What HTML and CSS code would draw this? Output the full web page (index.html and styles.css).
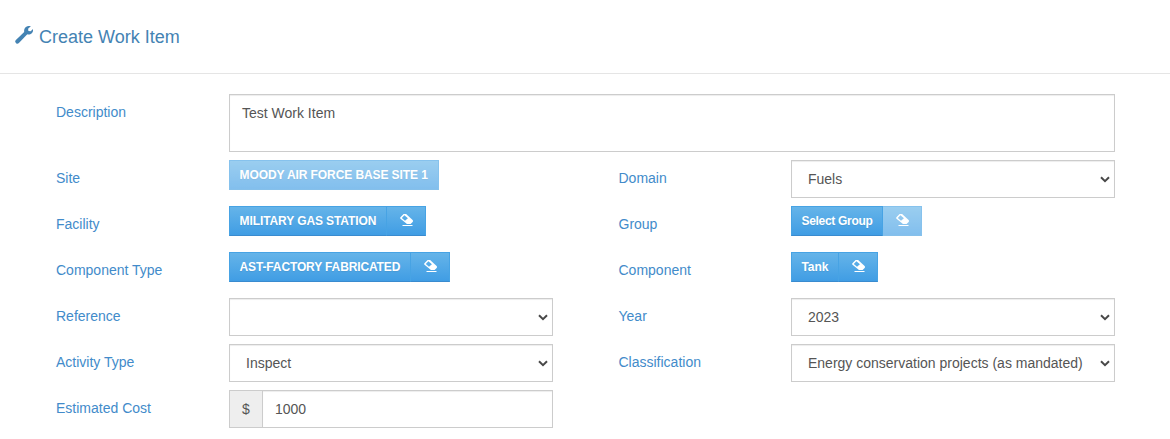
FILE: index.html
```
<!DOCTYPE html>
<html lang="en">
<head>
<meta charset="utf-8">
<title>Create Work Item</title>
<link rel="stylesheet" href="styles.css">
</head>
<body>
<svg width="0" height="0" class="defs">
  <symbol id="eraser" viewBox="0 0 14 14">
    <path fill="currentColor" fill-rule="evenodd" d="M3.600 1h2.500L12.900 7.200v1.500L10.600 11H7L.2 5.600V4.400zM4.400 2.200 1.800 4.900 5 7.800 7.900 5.200z"/>
    <path fill="currentColor" d="M2.500 12h10v1h-10z"/>
  </symbol>
</svg>
<header class="header">
  <svg class="wrench" viewBox="0 0 18 18"><path fill="currentColor" d="M11.300.8C12.600-.1 14.200-.2 15.800.2l-2.700 2.500.3 2.200 2.300.4L18 2.900c.3 1.700-.1 3.200-1.200 4.300-1.200 1.200-3 1.500-4.500 1.100L3.900 17c-.8.800-1.800 1-2.500.4l-.8-.8c-.7-.7-.5-1.700.3-2.500L9.200 6C8.800 4 9.600 1.900 11.300.8z"/></svg>
  <h1 class="title">Create Work Item</h1>
</header>
<main class="form">
  <label class="label">Description</label>
  <textarea class="control description">Test Work Item</textarea>

  <label class="label">Site</label>
  <div class="group"><button class="btn" disabled>MOODY AIR FORCE BASE SITE 1</button></div>
  <label class="label">Domain</label>
  <select class="control"><option>Fuels</option></select>

  <label class="label">Facility</label>
  <div class="group"><button class="btn">MILITARY GAS STATION</button><button class="btn erase"><svg class="icon"><use href="#eraser"/></svg></button></div>
  <label class="label">Group</label>
  <div class="group"><button class="btn mixed">Select Group</button><button class="btn erase" disabled><svg class="icon"><use href="#eraser"/></svg></button></div>

  <label class="label">Component Type</label>
  <div class="group"><button class="btn tight">AST-FACTORY FABRICATED</button><button class="btn erase"><svg class="icon"><use href="#eraser"/></svg></button></div>
  <label class="label">Component</label>
  <div class="group"><button class="btn">Tank</button><button class="btn erase"><svg class="icon"><use href="#eraser"/></svg></button></div>

  <label class="label">Reference</label>
  <select class="control"><option></option></select>
  <label class="label">Year</label>
  <select class="control"><option>2023</option></select>

  <label class="label">Activity Type</label>
  <select class="control"><option>Inspect</option></select>
  <label class="label">Classification</label>
  <select class="control"><option>Energy conservation projects (as mandated)</option></select>

  <label class="label">Estimated Cost</label>
  <div class="money"><span class="addon">$</span><input class="control amount" value="1000"></div>
</main>
</body>
</html>
```
FILE: styles.css
```
* { box-sizing: border-box; }
body {
  margin: 0;
  background: #fff;
  color: #555;
  font: 14px/20px "Liberation Sans", Arial, sans-serif;
  overflow: hidden;
}
.defs { display: none; }
.header {
  display: flex;
  height: 74px;
  padding: 26px 15px 0;
  border-bottom: 1px solid #e5e5e5;
  color: #4483b3;
}
.wrench { width: 18px; height: 18px; margin-right: 6px; }
.title { margin: 0; font-size: 18px; font-weight: 400; line-height: 22px; }
.form {
  display: grid;
  grid-template-columns: 173px 324px 65.500px 172.500px 324px;
  grid-template-rows: 58px;
  grid-auto-rows: 38px;
  row-gap: 8px;
  padding: 20px 0 0 56px;
}
.label { padding-top: 8px; color: #428bca; }
.form > .label:nth-child(4n + 5) { grid-column: 4; }
.form > .label:nth-child(4n + 3) { grid-column: 1; }
.control {
  width: 100%;
  height: 38px;
  margin: 0;
  padding: 6px 12px;
  border: 1px solid #ccc;
  border-radius: 0;
  background-color: #fff;
  box-shadow: inset 0 1px 1px rgba(0, 0, 0, .075);
  color: #555;
  font: inherit;
}
select.control {
  appearance: none;
  padding-left: 16px;
  background: url("data:image/svg+xml,%3Csvg xmlns='http://www.w3.org/2000/svg' width='10' height='7'%3E%3Cpath d='M1 1.200 5 5.100 9 1.200' fill='none' stroke='%23484848' stroke-width='2'/%3E%3C/svg%3E") right 4px top 15px no-repeat #fff;
}
.description { grid-column: 2 / 6; height: 58px; padding: 8px 12px; resize: none; }
.group { display: flex; align-items: flex-start; }
.btn {
  height: 30px;
  margin: 0;
  padding: 0 10px 1px 9.500px;
  border: 1px solid #47a3e4;
  border-bottom-color: #3a8bcf;
  background: linear-gradient(#65b4e9, #409de4);
  color: #fff;
  font: bold 12px/18px "Liberation Sans", Arial, sans-serif;
  letter-spacing: -.09px;
  text-shadow: 0 1px 1px rgba(0, 0, 0, .08);
  white-space: nowrap;
}
.tight { letter-spacing: -.13px; }
.mixed { letter-spacing: -.31px; }
.btn + .btn { margin-left: -1px; }
.btn:disabled { opacity: .65; border-bottom-color: #479fe0; }
.erase { display: flex; width: 40px; align-items: center; padding: 0 0 2px 13px; }
.icon { width: 14px; height: 14px; }
.money { display: flex; }
.addon {
  flex: 0 0 33px;
  padding: 8px 0 0;
  border: 1px solid #ccc;
  border-right: 0;
  background: #eee;
  text-align: center;
}
.amount { flex: 1; min-width: 0; }
```
